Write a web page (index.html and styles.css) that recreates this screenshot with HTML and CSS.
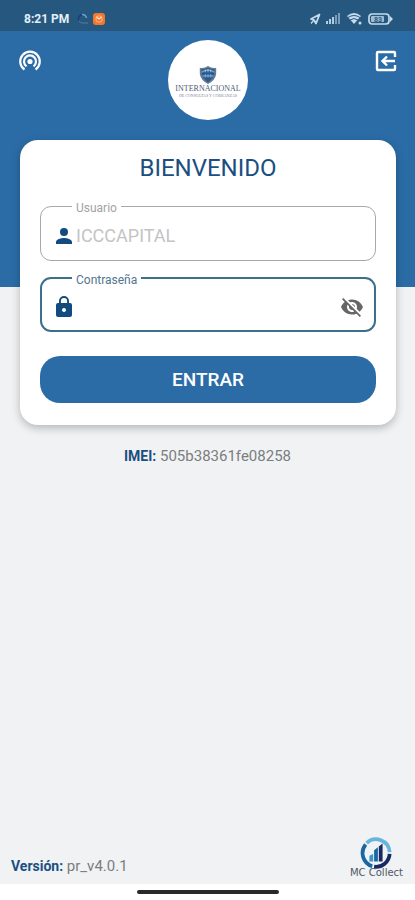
FILE: index.html
```html
<!DOCTYPE html>
<html lang="es">
<head>
<meta charset="utf-8">
<meta name="viewport" content="width=device-width, initial-scale=1">
<title>Bienvenido</title>
<link rel="stylesheet" href="styles.css">
</head>
<body>
<div class="status">
  <span class="time">8:21 PM</span>
  <svg class="swirl" width="12" height="12" viewBox="0 0 12 12" fill="none"><path d="M1.500 7a4.500 4.500 0 0 1 4-5.500" stroke="#163f70" stroke-width="1.500"/><path d="M5 1.500A4 4 0 0 1 9.500 5" stroke="#62a5d8" stroke-width="1.500"/><path d="M2 8q1 2 3 2h6" stroke="#527ca3"/></svg>
  <svg width="12" height="12" viewBox="0 0 12 12"><rect width="12" height="12" rx="3" fill="#f6762b"/><rect x="3" y="3" width="6" height="6" rx="2" fill="none" stroke="#ffb787"/><path d="M3.500 4 6 6l2.500-2" fill="none" stroke="#ffe3cf" stroke-width="1.200"/></svg>
  <span class="system">
    <svg width="12" height="12" viewBox="0 0 12 12" fill="none" stroke="#c4dced" stroke-width="1.800" stroke-linejoin="round"><path d="M10.500 1.500 2 6l3 1 2 3.500z"/><path d="M5 7 2 10.500" stroke-width="1.200"/></svg>
    <svg width="15" height="11" viewBox="0 0 15 11" fill="#b3cde0"><path d="M0 8h2v3H0zM3 6h2v5H3zM6 4h2v7H6z"/><path d="M9 2h2v9H9zM12 0h2v11h-2z" opacity=".6"/></svg>
    <svg width="17" height="13" viewBox="0 0 17 13"><path d="M1 4q7-6 14 0l-7 8z" fill="#c4dced"/><path d="M2 5.500q6-4 12 0M4 8q4-3 8 0" fill="none" stroke="#29587f"/><circle cx="14" cy="11" r="1.500" fill="#c4dced"/></svg>
    <svg width="25" height="12" viewBox="0 0 25 12"><rect x="1" y="1" width="20" height="10" rx="3" fill="none" stroke="#c4dced" stroke-width="1.700"/><path d="M22 3l3 3-3 3z" fill="#c4dced"/><rect x="3" y="3" width="13" height="6" rx="1" fill="#9fbdd3"/><text x="6" y="9" class="charge">83</text></svg>
  </span>
</div>
<main>
  <header>
    <button class="icon" aria-label="Conexión"><svg width="24" height="24" viewBox="0 0 24 24" fill="none" stroke="#fff" stroke-width="2.200"><path d="M6.500 20.500a9.800 9.800 0 1 1 11 0M8.500 17.300a6 6 0 1 1 7 0"/><circle cx="12" cy="12.500" r="2.600" fill="#fff" stroke="none"/></svg></button>
    <div class="brand">
      <svg width="20" height="20" viewBox="0 0 22 22"><path d="M11 1q4 3 9 2v7q-1 7-9 11-8-4-9-11V3q5 1 9-2z" fill="#65798f"/><path d="M11 3q4 2 7 2v5q-1 5-7 9-6-4-7-9V5q3 0 7-2z" fill="#285a91"/><path d="M4 8q7-5 14 0M5 12h12M8 5v3M11 4v4M14 5v3" stroke="#a9c7e1" fill="none"/><path d="M8 10v4M11 10v4M14 10v4" stroke="#7da9d0"/></svg>
      <span class="brand-name">INTERNACIONAL</span>
      <span class="brand-sub">DE CONSULTAS Y COBRANZAS</span>
    </div>
    <button class="icon" aria-label="Salir"><svg width="24" height="24" viewBox="0 0 24 24" fill="none" stroke="#fff" stroke-width="2.400"><path d="M21 8V4q0-1-1-1H4Q3 3 3 4v16q0 1 1 1h16q1 0 1-1v-4M21 12H9M13 7.500 8.500 12l4.500 4.500"/></svg></button>
  </header>
  <form class="card">
    <h1>BIENVENIDO</h1>
    <div class="field">
      <label for="user">Usuario</label>
      <svg width="24" height="24" viewBox="0 0 24 24" fill="#124b80"><path d="M12 12a4 4 0 1 0 0-8 4 4 0 0 0 0 8zm0 2c-2.700 0-8 1.300-8 4v2h16v-2c0-2.700-5.300-4-8-4z"/></svg>
      <input id="user" type="text" value="ICCCAPITAL">
    </div>
    <div class="field active">
      <label for="pass">Contraseña</label>
      <svg width="24" height="24" viewBox="0 0 24 24" fill="#124b80"><path d="M18 8h-1V6A5 5 0 0 0 7 6v2H6a2 2 0 0 0-2 2v10c0 1.100.900 2 2 2h12a2 2 0 0 0 2-2V10a2 2 0 0 0-2-2zm-6 9a2 2 0 1 1 0-4 2 2 0 0 1 0 4zm3.100-9H8.900V6a3.100 3.100 0 0 1 6.200 0z"/></svg>
      <input id="pass" type="password">
      <button type="button" class="icon" aria-label="Mostrar contraseña"><svg width="24" height="24" viewBox="0 0 24 24" fill="#666"><path d="M12 7c2.760 0 5 2.240 5 5 0 .65-.13 1.260-.36 1.830l2.920 2.920c1.510-1.260 2.700-2.890 3.430-4.750-1.730-4.390-6-7.500-11-7.500-1.400 0-2.740.25-3.980.7l2.160 2.160C10.740 7.130 11.350 7 12 7zM2 4.270l2.280 2.280.46.46C3.080 8.300 1.780 10.020 1 12c1.730 4.390 6 7.500 11 7.500 1.550 0 3.030-.3 4.380-.84l.42.42L19.730 22 21 20.730 3.270 3 2 4.270zM7.530 9.800l1.550 1.550c-.05.21-.08.43-.08.65 0 1.660 1.340 3 3 3 .22 0 .44-.03.65-.08l1.550 1.550c-.67.33-1.410.53-2.200.53-2.760 0-5-2.240-5-5 0-.79.2-1.530.53-2.200zm4.310-.78 3.150 3.150.02-.16c0-1.660-1.340-3-3-3l-.17.010z"/></svg></button>
    </div>
    <button class="submit" type="submit">ENTRAR</button>
  </form>
  <p class="imei"><b>IMEI:</b> 505b38361fe08258</p>
  <footer>
    <p><b>Versión:</b> pr_v4.0.1</p>
    <div class="maker">
      <svg width="32" height="32" viewBox="0 0 34 34" fill="none" stroke-width="4"><path d="M7 6.500A14.500 14.500 0 0 1 31.500 16" stroke="#67b5df"/><path d="M6 8A14.500 14.500 0 0 0 13 31" stroke="#1767a5"/><path d="M15 31.500A14.500 14.500 0 0 0 31.500 18" stroke="#172b62"/><path d="M10 20l4-2v8h-4z" fill="#3c94cb"/><path d="M15 14l4-3v15h-4z" fill="#1767a5"/><path d="M20 10l4-3v19h-4z" fill="#172b62"/></svg>
      <span>MC Collect</span>
    </div>
  </footer>
</main>
<div class="nav"><span></span></div>
</body>
</html>
```
FILE: styles.css
```css
* { box-sizing: border-box; }
body {
  margin: 0;
  min-height: 100vh;
  display: flex;
  flex-direction: column;
  background: #fff;
  font-family: Roboto, sans-serif;
  color: #7b7d80;
}
p, h1 { margin: 0; }
b { color: #1b4f80; font-weight: 700; }
svg { display: block; flex: none; }
button { border: 0; padding: 0; background: none; font: inherit; }
.icon { width: 24px; height: 24px; }

.status {
  display: flex;
  align-items: center;
  gap: 4px;
  height: 31px;
  padding: 6px 22px 0 24px;
  background: #26587f;
}
.time { color: #e4eff7; font-size: 12px; font-weight: 700; margin-right: 4px; }
.system { display: flex; align-items: center; gap: 5px; margin-left: auto; }
.charge { font: 700 7px Roboto, sans-serif; fill: #26587f; }

main {
  flex: 1;
  display: flex;
  flex-direction: column;
  background: linear-gradient(#2b6ca6 256px, #f0f2f4 256px);
}
header {
  display: flex;
  justify-content: space-between;
  padding: 9px 17px 20px 18px;
}
header .icon { margin-top: 9px; }
.brand {
  width: 80px;
  height: 80px;
  border-radius: 50%;
  background: #fff;
  display: flex;
  flex-direction: column;
  align-items: center;
  padding-top: 25px;
  font-family: "Liberation Serif", serif;
  white-space: nowrap;
}
.brand-name { font-size: 8px; line-height: 8px; color: #4f5c78; }
.brand-sub { font-size: 4px; line-height: 5px; color: #7b8498; }

.card {
  margin: 0 19px 0 20px;
  padding: 14px 20px 22px;
  border-radius: 18px;
  background: #fff;
  box-shadow: 0 3px 8px rgba(0, 0, 0, .25);
}
h1 {
  color: #1b4f80;
  font-size: 24px;
  line-height: 28px;
  font-weight: 400;
  text-align: center;
}
.field {
  position: relative;
  display: flex;
  align-items: center;
  height: 55px;
  margin-top: 24px;
  padding: 4px 11px 0;
  border: 1px solid #a8a8a8;
  border-radius: 11px;
}
.field + .field { margin-top: 16px; }
.field.active { border: 2px solid #3d708c; padding: 4px 10px 0; }
.field label {
  position: absolute;
  top: -6px;
  left: 31px;
  padding: 0 4px;
  background: #fff;
  font-size: 12px;
  line-height: 14px;
  color: #a3a3a3;
}
.field.active label { color: #527590; left: 30px; }
.field input {
  flex: 1;
  min-width: 0;
  border: 0;
  padding: 0;
  outline: 0;
  background: none;
  font: 18px Roboto, sans-serif;
  color: #c4c4c4;
}
.submit {
  width: 100%;
  height: 47px;
  margin-top: 24px;
  border-radius: 20px;
  background: #2b6ca6;
  color: #fff;
  font-size: 19px;
  font-weight: 500;
}
.imei { margin-top: 21px; font-size: 15px; line-height: 20px; text-align: center; }
.imei b, footer b { font-size: 14px; }

footer {
  display: flex;
  align-items: flex-end;
  justify-content: space-between;
  margin-top: auto;
  padding: 0 12px 7px 11px;
  font-size: 15px;
  line-height: 20px;
}
footer p { margin-bottom: 1px; }
.maker { display: flex; flex-direction: column; align-items: center; }
.maker span { font: 10px/8px "DejaVu Sans", sans-serif; color: #505866; }

.nav { height: 16px; display: flex; justify-content: center; align-items: center; }
.nav span { width: 142px; height: 4px; border-radius: 2px; background: #292929; }
```
